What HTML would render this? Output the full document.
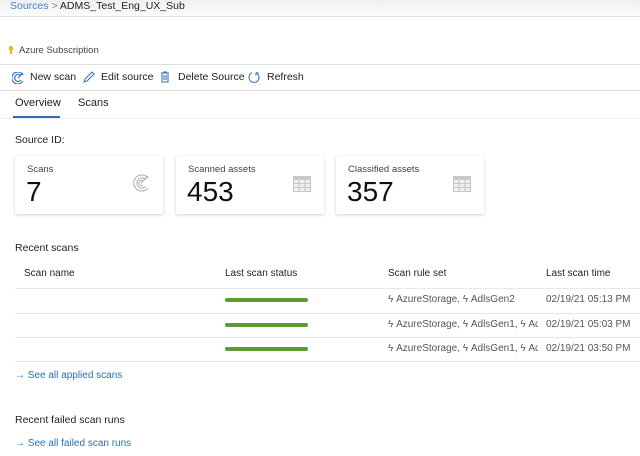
<!DOCTYPE html><html><head><style>
body{margin:0;width:640px;height:456px;background:#fff;font-family:"Liberation Sans",sans-serif;color:#222;position:relative;overflow:hidden;font-size:10.5px}
.a{position:absolute;white-space:nowrap}
.hl{position:absolute;height:1px;background:#ddd;left:0;width:640px}
.card{position:absolute;top:156px;width:148px;height:58px;background:#fff;box-shadow:0 1px 3px rgba(0,0,0,.18);border-radius:2px}
.card .t{position:absolute;left:12px;top:8px;font-size:9.5px;color:#444}
.card .n{position:absolute;left:11px;top:20px;font-size:28px;color:#111}
.bar{position:absolute;left:225px;width:83px;height:4px;border-radius:2px;background:#5c9a2c}
.rl{position:absolute;left:15px;width:625px;height:1px;background:#e8e8e8}
.link{color:#1f6fc0}
.rs{position:absolute;left:388px;width:150px;overflow:hidden;font-size:10px;color:#555;white-space:nowrap}
.tm{position:absolute;left:546px;font-size:10px;color:#555;white-space:nowrap}
</style></head><body>
<div class="a" style="left:0;top:0;width:640px;height:16px;background:linear-gradient(#f0f0f0,#fbfbfb)"></div>
<div class="a" style="left:10px;top:0px;font-size:10.5px"><span style="color:#4a7fc0">Sources</span> <span style="color:#888">&gt;</span> ADMS_Test_Eng_UX_Sub</div>
<div class="hl" style="top:16px"></div>
<div class="a" style="left:9px;top:46px;width:4px;height:5px;background:#e8b820;border-radius:2px"></div>
<div class="a" style="left:10px;top:50px;width:2px;height:4px;background:#e8b820"></div>
<div class="a" style="left:19px;top:45px;font-size:9.5px;color:#444">Azure Subscription</div>
<div class="hl" style="top:64px"></div>
<svg class="a" style="left:12px;top:72px" width="12" height="12" viewBox="0 0 12 12" fill="none" stroke="#3b78c4" stroke-width="1.2"><path d="M11 3A6 6 0 1 0 11 9M9 4A3.5 3.5 0 1 0 9 8M6 6L11 1"/></svg>
<div class="a" style="left:30px;top:71px">New scan</div>
<svg class="a" style="left:83px;top:71px" width="12" height="12" viewBox="0 0 12 12" fill="none" stroke="#3b78c4" stroke-width="1.1"><path d="M1 11L2 8L9 1L11 3L4 10Z"/></svg>
<div class="a" style="left:101px;top:71px">Edit source</div>
<svg class="a" style="left:160px;top:71px" width="10" height="12" viewBox="0 0 10 12" fill="none" stroke="#3b78c4" stroke-width="1.1"><path d="M1 2H9M3.5 2V1H6.5V2M2 2V11H8V2M4 4V9M6 4V9"/></svg>
<div class="a" style="left:178px;top:71px">Delete Source</div>
<svg class="a" style="left:248px;top:71px" width="12" height="12" viewBox="0 0 12 12" fill="none" stroke="#3b78c4" stroke-width="1.1"><path d="M4 1.8A5 5 0 1 0 8 1.8M8 1.8V4.5M8 1.8H10.5"/></svg>
<div class="a" style="left:267px;top:71px">Refresh</div>
<div class="hl" style="top:90px"></div>
<div class="a" style="left:15px;top:97px;font-size:11px">Overview</div>
<div class="a" style="left:78px;top:97px;font-size:11px">Scans</div>
<div class="a" style="left:13px;top:116px;width:47px;height:2px;background:#2a6fbd"></div>
<div class="hl" style="top:118px;background:#eee"></div>
<div class="a" style="left:15px;top:134px;font-size:10.5px">Source ID:</div>
<div class="card" style="left:15px"><div class="t">Scans</div><div class="n">7</div>
<svg class="a" style="left:117px;top:18px" width="18" height="18" viewBox="0 0 18 18" fill="none" stroke="#aaa" stroke-width="1"><path d="M16 4A8 8 0 1 0 16 14M13.5 5.5A5 5 0 1 0 13.5 12.5M11 7A2.5 2.5 0 1 0 11 11M9 9L16 2"/></svg></div>
<div class="card" style="left:176px"><div class="t">Scanned assets</div><div class="n">453</div>
<svg class="a" style="left:117px;top:20px" width="18" height="16" viewBox="0 0 18 16"><rect width="18" height="16" fill="#c8c8c8"/><g fill="#eee"><rect x="1" y="4" width="4.5" height="3"/><rect x="6.7" y="4" width="4.5" height="3"/><rect x="12.4" y="4" width="4.5" height="3"/><rect x="1" y="8" width="4.5" height="3"/><rect x="6.7" y="8" width="4.5" height="3"/><rect x="12.4" y="8" width="4.5" height="3"/><rect x="1" y="12" width="4.5" height="3"/><rect x="6.7" y="12" width="4.5" height="3"/><rect x="12.4" y="12" width="4.5" height="3"/></g></svg></div>
<div class="card" style="left:336px"><div class="t">Classified assets</div><div class="n">357</div>
<svg class="a" style="left:117px;top:20px" width="18" height="16" viewBox="0 0 18 16"><rect width="18" height="16" fill="#c8c8c8"/><g fill="#eee"><rect x="1" y="4" width="4.5" height="3"/><rect x="6.7" y="4" width="4.5" height="3"/><rect x="12.4" y="4" width="4.5" height="3"/><rect x="1" y="8" width="4.5" height="3"/><rect x="6.7" y="8" width="4.5" height="3"/><rect x="12.4" y="8" width="4.5" height="3"/><rect x="1" y="12" width="4.5" height="3"/><rect x="6.7" y="12" width="4.5" height="3"/><rect x="12.4" y="12" width="4.5" height="3"/></g></svg></div>
<div class="a" style="left:15px;top:242px;font-size:10.5px">Recent scans</div>
<div class="a" style="left:24px;top:268px;font-size:10px">Scan name</div>
<div class="a" style="left:225px;top:268px;font-size:10px">Last scan status</div>
<div class="a" style="left:388px;top:268px;font-size:10px">Scan rule set</div>
<div class="a" style="left:546px;top:268px;font-size:10px">Last scan time</div>
<div class="rl" style="top:288px"></div><div class="rl" style="top:313px"></div><div class="rl" style="top:337px"></div><div class="rl" style="top:361px"></div>
<div class="bar" style="top:298px"></div><div class="bar" style="top:323px"></div><div class="bar" style="top:347px"></div>
<div class="rs" style="top:294px">ϟ AzureStorage, ϟ AdlsGen2</div>
<div class="rs" style="top:319px">ϟ AzureStorage, ϟ AdlsGen1, ϟ AdlsGen</div>
<div class="rs" style="top:343px">ϟ AzureStorage, ϟ AdlsGen1, ϟ AdlsGen</div>
<div class="tm" style="top:294px">02/19/21 05:13 PM</div>
<div class="tm" style="top:319px">02/19/21 05:03 PM</div>
<div class="tm" style="top:343px">02/19/21 03:50 PM</div>
<div class="a link" style="left:15px;top:370px;font-size:10px">→ See all applied scans</div>
<div class="a" style="left:15px;top:414px;font-size:10.5px">Recent failed scan runs</div>
<div class="a link" style="left:15px;top:438px;font-size:10px">→ See all failed scan runs</div>
</body></html>
